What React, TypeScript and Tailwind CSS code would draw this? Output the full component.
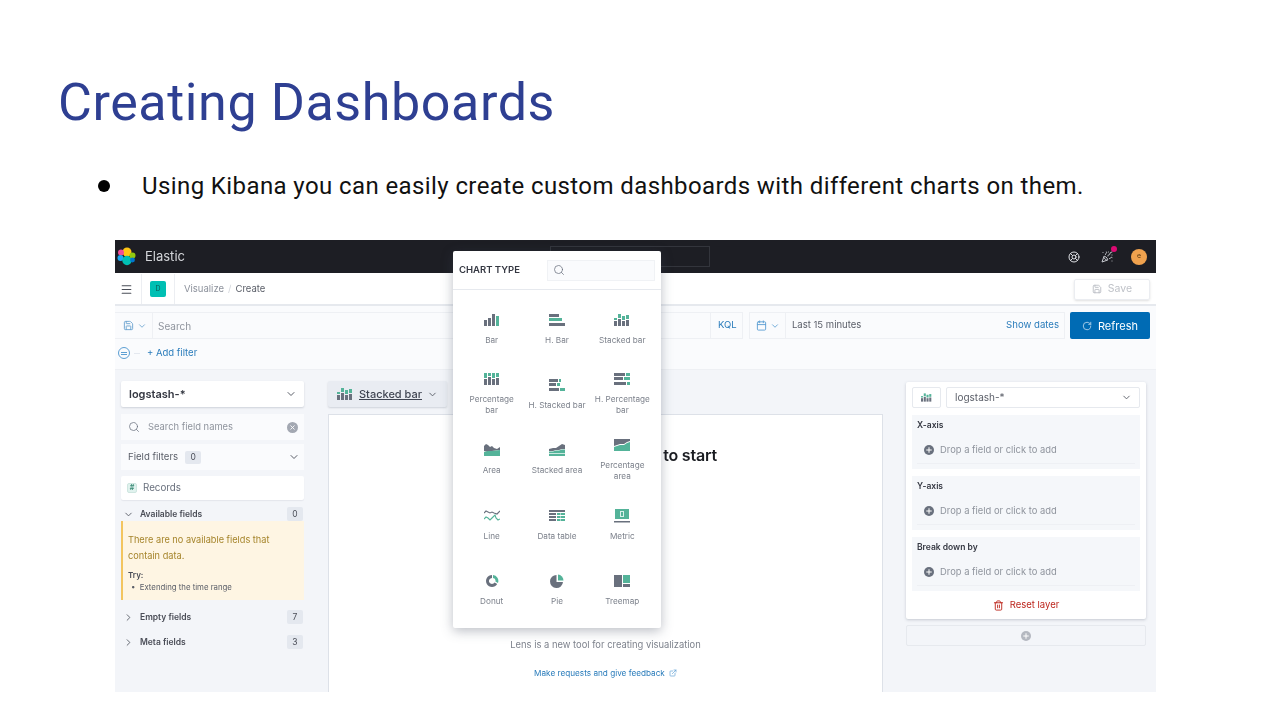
import React from "react";
import { Menu, ChevronDown, ChevronRight, Search, Calendar, Save, RotateCw, Trash2, ExternalLink, LifeBuoy, PartyPopper, Plus, X } from "lucide-react";

const G = "#69707d";
const T = "#54b399";

function ElasticLogo() {
  return (
    <svg width="19" height="19" viewBox="0 0 19 19">
      <circle cx="10" cy="5" r="4.5" fill="#fec514" />
      <circle cx="4" cy="5.5" r="3" fill="#f04e98" />
      <circle cx="3.5" cy="11" r="3" fill="#1ba9f5" />
      <circle cx="10" cy="13.5" r="4.7" fill="#00bfb3" />
      <circle cx="15.5" cy="8.5" r="3" fill="#93c90e" />
      <circle cx="15.5" cy="13" r="2.4" fill="#07c" />
    </svg>
  );
}

type R = [number, number, number, number, string];

function Rects({ r }: { r: R[] }) {
  return (
    <svg width="16" height="16" viewBox="0 0 16 16">
      {r.map((x, i) => (
        <rect key={i} x={x[0]} y={x[1]} width={x[2]} height={x[3]} fill={x[4]} />
      ))}
    </svg>
  );
}

const stacked: R[] = [
  [0, 9, 3, 5, G], [4, 7, 3, 7, G], [8, 9, 3, 5, G], [12, 8, 3, 6, G],
  [0, 6, 3, 2, T], [4, 2, 3, 4, T], [8, 4, 3, 4, T], [12, 3, 3, 4, T],
];

function ChartIcon({ name }: { name: string }) {
  switch (name) {
    case "Bar":
      return <Rects r={[[0, 8, 3, 6, G], [4, 6, 3, 8, G], [8, 2, 3, 12, G], [12, 4, 3, 10, T]]} />;
    case "H. Bar":
      return <Rects r={[[0, 2, 10, 3, G], [0, 6, 13, 3, T], [0, 11, 16, 3, G]]} />;
    case "Stacked bar":
      return <Rects r={stacked} />;
    case "Percentage bar":
      return <Rects r={[[0, 2, 3, 5, T], [4, 2, 3, 3, T], [8, 2, 3, 5, T], [12, 2, 3, 4, T], [0, 8, 3, 6, G], [4, 6, 3, 8, G], [8, 8, 3, 6, G], [12, 7, 3, 7, G]]} />;
    case "H. Stacked bar":
      return <Rects r={[[0, 2, 9, 3, G], [10, 2, 2, 3, T], [0, 6, 7, 3, G], [8, 6, 3, 3, T], [0, 11, 10, 3, G], [11, 11, 5, 3, T]]} />;
    case "H. Percentage bar":
      return <Rects r={[[0, 2, 11, 3, G], [12, 2, 4, 3, T], [0, 6, 9, 3, G], [10, 6, 6, 3, T], [0, 11, 12, 3, G], [13, 11, 3, 3, T]]} />;
    case "Area":
      return (
        <svg width="16" height="16" viewBox="0 0 16 16">
          <path d="M0 9V4l2-2 2 1 2 2 2-1 2 2 3 1 3-2v3l-8 1-4 1z" fill={G} />
          <path d="M0 10l4-1 4 0 8-1v6H0z" fill={T} />
        </svg>
      );
    case "Stacked area":
      return (
        <svg width="16" height="16" viewBox="0 0 16 16">
          <path d="M0 7l4-1 3 0 3-2 3-2 3 1v4l-3 0-3 1-3 0-3 1-4 0z" fill={G} />
          <path d="M0 9.500l4 0 3-1 3 0 3-1 3 0v6.500H0z" fill={T} />
          <rect x="0" y="11" width="16" height="0.700" fill="#fff" />
        </svg>
      );
    case "Percentage area":
      return (
        <svg width="16" height="16" viewBox="0 0 16 16">
          <path d="M0 2h16v2l-3 1-3 2-4 0-6 2z" fill={G} />
          <path d="M0 10l6-2 4 0 3-2 3-1v9H0z" fill={T} />
        </svg>
      );
    case "Line":
      return (
        <svg width="16" height="16" viewBox="0 0 16 16" fill="none" strokeWidth="1.100">
          <path d="M0 5l2-2 2 1 2 1 2-1 2 1 3 1 3-3" stroke={G} />
          <path d="M0 11l2-2 2 1 2 2 2-2 3-3 1 3 2 2 2-1" stroke={T} />
        </svg>
      );
    case "Data table":
      return <Rects r={[[0, 2, 16, 2, G], [0, 5, 7, 2, G], [0, 8, 7, 2, G], [0, 11, 7, 2, G], [8, 5, 3.500, 2, T], [12, 5, 4, 2, T], [8, 8, 3.500, 2, T], [12, 8, 4, 2, T], [8, 11, 3.500, 2, T], [12, 11, 4, 2, T]]} />;
    case "Metric":
      return (
        <svg width="16" height="16" viewBox="0 0 16 16">
          <rect x="1" y="1" width="14" height="10" fill={T} />
          <rect x="6.500" y="3.500" width="3" height="5" fill="none" stroke="#d8f0ea" strokeWidth="1" />
          <rect x="0" y="13" width="16" height="1.500" fill={G} />
        </svg>
      );
    case "Donut":
      return (
        <svg width="16" height="16" viewBox="0 0 16 16">
          <path d="M8 2a6 6 0 1 0 5.200 9l-2.600-1.500A3 3 0 1 1 8 5z" fill={G} />
          <path d="M9 2a6 6 0 0 1 5 8l-2.600-1.400A3 3 0 0 0 9 5z" fill={T} />
        </svg>
      );
    case "Pie":
      return (
        <svg width="16" height="16" viewBox="0 0 16 16">
          <path d="M7.500 2a6.500 6.500 0 1 0 6.500 7H7.500z" fill={G} />
          <path d="M9 1.500A6 6 0 0 1 14.500 7.500H9z" fill={T} />
        </svg>
      );
    default:
      return <Rects r={[[0, 2, 8, 12, G], [9, 2, 7, 8, T], [9, 11, 7, 3, G]]} />;
  }
}

const charts = [
  "Bar", "H. Bar", "Stacked bar",
  "Percentage bar", "H. Stacked bar", "H. Percentage bar",
  "Area", "Stacked area", "Percentage area",
  "Line", "Data table", "Metric",
  "Donut", "Pie", "Treemap",
];

function ChartPopover() {
  return (
    <div className="absolute left-[338px] top-[11px] w-[208px] h-[377px] bg-white rounded-[2px] shadow-[0_3px_12px_rgba(60,70,90,0.35)] z-10">
      <div className="flex items-center justify-between h-[39px] pl-[6px] pr-[6px] border-b border-[#e6e9ee]">
        <span className="text-[9.500px] font-semibold text-[#343741]">CHART TYPE</span>
        <div className="flex items-center w-[108px] h-[21px] pl-[5px] bg-[#fafbfd] border border-[#f0f2f5]">
          <Search size={12} strokeWidth={1.5} color="#69707d" />
        </div>
      </div>
      <div className="grid grid-cols-3 px-[6px] pt-[6px]">
        {charts.map((c) => (
          <div key={c} className="flex flex-col items-center justify-center h-[65.300px] gap-[7px]">
            <ChartIcon name={c} />
            <span className="max-w-[58px] text-[8.200px] leading-[11px] text-[#7d828c] text-center">{c}</span>
          </div>
        ))}
      </div>
    </div>
  );
}

function TopBar() {
  return (
    <div className="flex items-center h-[33px] bg-[#1d1e24] pl-[2px] pr-[9px]">
      <ElasticLogo />
      <span className="ml-[9px] text-[13px] text-[#d4d6da]">Elastic</span>
      <div className="ml-[365px] w-[160px] h-[21px] border border-[#33353c]" />
      <div className="ml-auto flex items-center">
        <LifeBuoy size={12} color="#dfe1e5" />
        <div className="relative ml-[21px]">
          <PartyPopper size={12} color="#c8cad0" />
          <span className="absolute -top-[5px] -right-[4px] w-[6px] h-[6px] rounded-full bg-[#dd0a73]" />
        </div>
        <span className="ml-[18px] flex items-center justify-center w-[16px] h-[16px] rounded-full bg-[#f0a24e] text-[7px] text-[#5b3a10]">e</span>
      </div>
    </div>
  );
}

function NavRow() {
  return (
    <div className="flex items-center h-[33px] pt-[1px] bg-white border-b-2 border-[#e6e9ee]">
      <div className="flex items-center w-[27px] h-full pl-[5px] border-r border-[#eceef2]">
        <Menu size={13} color="#4a4d57" />
      </div>
      <div className="flex items-center justify-center w-[33px] h-full border-r border-[#eceef2]">
        <span className="flex items-center justify-center w-[16px] h-[16px] rounded-[2px] bg-[#00bfb3] text-[7px] text-[#0b5c56]">D</span>
      </div>
      <span className="ml-[9px] text-[9.500px] text-[#8d929c]">Visualize</span>
      <span className="mx-[4px] text-[9.500px] text-[#d3d6dc]">/</span>
      <span className="text-[9.500px] text-[#5a5e68]">Create</span>
      <div className="ml-auto mr-[6px] flex items-center justify-center gap-[6px] w-[76px] h-[21px] border border-[#ebedf1] rounded-[2px] shadow-sm">
        <Save size={10} color="#b5b8bf" />
        <span className="text-[10.500px] text-[#bfc2c8]">Save</span>
      </div>
    </div>
  );
}

function QueryRows() {
  return (
    <div className="bg-[#fafbfd] h-[64px] border-b border-[#eef0f4]">
      <div className="flex items-center h-[33px] pt-[6px] pr-[6px]">
        <div className="flex items-center flex-1 h-[27px] border-y border-r border-[#eef0f4] mr-[6px]">
          <div className="flex items-center w-[38px] h-full pl-[8px] gap-[3px] border-r border-[#eef0f4]">
            <Save size={11} color="#6ba3d0" />
            <ChevronDown size={10} color="#6ba3d0" />
          </div>
          <span className="ml-[5px] pt-[1px] text-[10px] text-[#8f949d]">Search</span>
          <div className="ml-auto flex items-center w-[32px] h-full pl-[7px] border-l border-[#eef0f4] text-[9.500px] text-[#2a7cbb]">KQL</div>
        </div>
        <div className="flex items-center w-[316px] h-[27px] border border-[#eef0f4] mr-[5px]">
          <div className="flex items-center w-[36px] h-full pl-[6px] gap-[3px] border-r border-[#eef0f4]">
            <Calendar size={11} color="#5c9fd3" />
            <ChevronDown size={10} color="#5c9fd3" />
          </div>
          <span className="ml-[6px] text-[9.500px] text-[#5a5e68]">Last 15 minutes</span>
          <span className="ml-auto mr-[5px] text-[9.600px] text-[#2a7cbb]">Show dates</span>
        </div>
        <div className="flex items-center justify-center gap-[6px] w-[80px] h-[27px] pt-[1px] bg-[#006bb4] rounded-[2px] text-[11px] text-white">
          <RotateCw size={10} color="#bcd9ee" />
          Refresh
        </div>
      </div>
      <div className="flex items-center h-[28px] pl-[3px]">
        <div className="flex items-center justify-center w-[12px] h-[12px] rounded-full border border-[#5c9fd3]">
          <span className="block w-[6px] h-[3px] border-y border-[#5c9fd3]" />
        </div>
        <span className="ml-[4px] w-[6px] h-px bg-[#e4e8ef]" />
        <span className="ml-[7px] text-[9.500px] text-[#2a7cbb]">+ Add filter</span>
      </div>
    </div>
  );
}

function CountRow({ open, label, n, className }: { open?: boolean; label: string; n: number; className: string }) {
  return (
    <div className={"flex items-center h-[14px] pr-[1px] " + className}>
      {open ? <ChevronDown size={11} color="#5a5e68" /> : <ChevronRight size={11} color="#5a5e68" />}
      <span className="ml-[6px] text-[8.500px] font-semibold text-[#4a4d57]">{label}</span>
      <span className="ml-auto flex items-center justify-center w-[16px] h-[14px] rounded-[2px] bg-[#e4e8ef] text-[8.500px] text-[#4a4d57]">{n}</span>
    </div>
  );
}

function LeftPanel() {
  return (
    <div className="w-[201px] pl-[6px] pr-[12px] pt-[11px] bg-[#f3f5f9] h-full">
      <div className="flex items-center justify-between h-[26px] pl-[8px] pr-[7px] bg-white rounded-[2px] shadow-[0_1px_2px_rgba(60,70,90,0.2)]">
        <span className="text-[11px] font-semibold text-[#343741]">logstash-*</span>
        <ChevronDown size={12} color="#5a5e68" />
      </div>
      <div className="flex items-center h-[26px] mt-[7px] pl-[7px] pr-[6px] bg-[#fafbfd]">
        <Search size={12} strokeWidth={1.5} color="#69707d" />
        <span className="ml-[8px] text-[9.400px] text-[#8f949d]">Search field names</span>
        <span className="ml-auto flex items-center justify-center w-[11px] h-[11px] rounded-full bg-[#a3a8b2]">
          <X size={7} color="#fff" strokeWidth={3} />
        </span>
      </div>
      <div className="flex items-center h-[26px] mt-[4px] pl-[7px] pr-[4px] bg-[#fafbfd]">
        <span className="text-[9.600px] text-[#5a5e68]">Field filters</span>
        <span className="ml-[7px] flex items-center justify-center w-[16px] h-[13px] rounded-[2px] bg-[#e4e8ef] text-[8.500px] text-[#4a4d57]">0</span>
        <ChevronDown size={12} color="#5a5e68" className="ml-auto" />
      </div>
      <div className="flex items-center h-[24px] mt-[6px] pl-[6px] bg-white rounded-[2px] shadow-[0_1px_1px_rgba(60,70,90,0.08)]">
        <span className="flex items-center justify-center w-[10px] h-[10px] bg-[#e0f2ee] border border-[#cfe6e0] rounded-[2px] text-[7px] font-bold text-[#3d8c78]">#</span>
        <span className="ml-[6px] text-[9.800px] text-[#69707d]">Records</span>
      </div>
      <CountRow open label="Available fields" n={0} className="mt-[7px] pl-[2px]" />
      <div className="pt-[11px] h-[79px] pl-[5px] pr-[4px] bg-[#fef5e3] border-l-2 border-[#f3c55f]">
        <p className="text-[9.200px] leading-[16px] text-[#a5842a]">There are no available fields that contain data.</p>
        <p className="mt-[6px] text-[8px] leading-[11px] font-semibold text-[#4a4d57]">Try:</p>
        <p className="text-[7.800px] leading-[12px] text-[#5a5e68] pl-[3px]">•&nbsp; Extending the time range</p>
      </div>
      <CountRow label="Empty fields" n={7} className="mt-[10px] pl-[2px]" />
      <CountRow label="Meta fields" n={3} className="mt-[11px] pl-[2px]" />
    </div>
  );
}

function CenterPanel() {
  return (
    <div className="w-[555px] ml-[12px] pt-[11px] flex flex-col h-full">
      <div className="flex items-center w-[119px] h-[26px] pl-[9px] bg-[#e9ecf2] rounded-[2px] shadow-[0_1px_2px_rgba(60,70,90,0.2)]">
        <Rects r={stacked} />
        <span className="ml-[6px] text-[11px] font-medium underline text-[#404552]">Stacked bar</span>
        <ChevronDown size={11} color="#5a5e68" className="ml-[5px]" />
      </div>
      <div className="flex flex-col items-center flex-1 mt-[7px] bg-white border-x border-t border-[#dde1e8]">
        <h2 className="mt-[28px] text-[16px] font-semibold text-[#1a1c21] tracking-[-0.2px]">Drop some fields here to start</h2>
        <p className="mt-[171px] text-[9.400px] text-[#7d828c]">Lens is a new tool for creating visualization</p>
        <div className="mt-[15px] flex items-center gap-[4px] text-[8.200px] text-[#2a7cbb]">
          Make requests and give feedback
          <ExternalLink size={8} color="#5c9fd3" />
        </div>
      </div>
    </div>
  );
}

function DropZone({ label, className }: { label: string; className: string }) {
  return (
    <div className={"h-[54px] px-[5px] pt-[4px] bg-[#f5f7fa] " + className}>
      <div className="text-[8.500px] leading-[12px] font-semibold text-[#343741]">{label}</div>
      <div className="flex items-center h-[27px] mt-[6px] pl-[7px] border-b border-[#eef0f4]">
        <span className="flex items-center justify-center w-[10px] h-[10px] rounded-full bg-[#69707d]">
          <Plus size={8} color="#fff" strokeWidth={3} />
        </span>
        <span className="ml-[6px] text-[9.400px] text-[#8f949d]">Drop a field or click to add</span>
      </div>
    </div>
  );
}

function RightPanel() {
  return (
    <div className="flex-1 ml-[22px] pl-[1px] pr-[10px] pt-[12px] bg-[#f3f5f9] h-full">
      <div className="h-[237px] px-[6px] pt-[5px] bg-white rounded-[2px] shadow-[0_1px_3px_rgba(60,70,90,0.25)]">
        <div className="flex items-center gap-[5px]">
          <div className="flex items-center justify-center w-[29px] h-[21px] border border-[#e6e9ee] rounded-[2px]">
            <svg width="11" height="11" viewBox="0 0 16 16">
              {stacked.map((x, i) => (
                <rect key={i} x={x[0]} y={x[1]} width={x[2]} height={x[3]} fill={x[4]} />
              ))}
            </svg>
          </div>
          <div className="flex items-center justify-between flex-1 h-[21px] pl-[8px] pr-[7px] border border-[#e6e9ee] rounded-[2px]">
            <span className="text-[10px] text-[#5a5e68]">logstash-*</span>
            <ChevronDown size={11} color="#5a5e68" />
          </div>
        </div>
        <DropZone label="X-axis" className="mt-[7px]" />
        <DropZone label="Y-axis" className="mt-[7px]" />
        <DropZone label="Break down by" className="mt-[7px]" />
        <div className="flex items-center justify-center gap-[6px] mt-[7px] text-[9.500px] text-[#bd271e]">
          <Trash2 size={11} color="#bd271e" />
          Reset layer
        </div>
      </div>
      <div className="flex items-center justify-center h-[21px] mt-[6px] border border-[#e6e9ee] rounded-[2px]">
        <span className="flex items-center justify-center w-[10px] h-[10px] rounded-full bg-[#b4b8c0]">
          <Plus size={8} color="#fff" strokeWidth={3} />
        </span>
      </div>
    </div>
  );
}

export default function App() {
  return (
    <div className="w-[1280px] h-[720px] bg-white overflow-hidden font-['Roboto',sans-serif]">
      <div className="h-[240px]">
        <h1 className="pl-[58px] pt-[73px] text-[52px] leading-[60px] text-[#2e3f92] tracking-[0.6px]">Creating Dashboards</h1>
        <div className="flex items-center pl-[98px] mt-[37px]">
          <span className="w-[12px] h-[12px] rounded-full bg-black" />
          <p className="ml-[32px] text-[24px] leading-[32px] text-[#111] tracking-[0.4px]">Using Kibana you can easily create custom dashboards with different charts on them.</p>
        </div>
      </div>
      <div className="relative ml-[115px] w-[1041px] h-[452px] overflow-hidden font-['Inter',sans-serif] blur-[0.3px]">
        <TopBar />
        <NavRow />
        <QueryRows />
        <div className="flex h-[322px] bg-[#f3f5f9]">
          <LeftPanel />
          <CenterPanel />
          <RightPanel />
        </div>
        <ChartPopover />
      </div>
    </div>
  );
}
